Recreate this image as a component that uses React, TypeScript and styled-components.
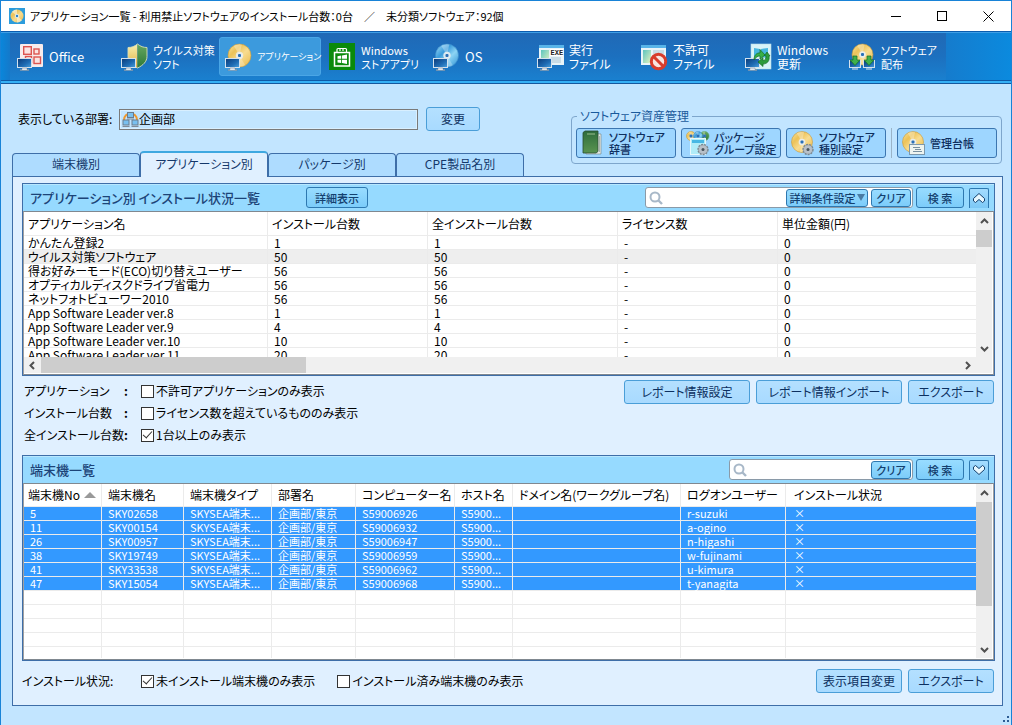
import React from "react";
import styled, { createGlobalStyle, css } from "styled-components";

const GlobalStyle = createGlobalStyle`
  *, *::before, *::after { box-sizing: border-box; }
  body {
    margin: 0;
    background: #c2e5ff;
    color: #000;
    font-family: "Noto Sans CJK JP", sans-serif;
    font-feature-settings: "palt";
    font-size: 12px;
    line-height: 14px;
  }
  button, input { font: inherit; font-feature-settings: inherit; color: inherit; }
  svg { display: block; flex: none; }
`;

/* ---------- window frame ---------- */

const Window = styled.div`
  display: flex;
  flex-direction: column;
  min-width: 1000px;
  min-height: 100vh;
  border: 1px solid #1883d7;
  background: #c2e5ff;
`;

const TitleBar = styled.header`
  display: flex;
  align-items: center;
  height: 30px;
  padding-left: 8px;
  background: #fff;
`;

const TitleText = styled.h1`
  flex: 1;
  margin: 0 0 0 5px;
  font-size: 11px;
  font-weight: 400;
  white-space: pre;
`;

const CaptionButton = styled.button`
  display: flex;
  align-items: center;
  justify-content: center;
  width: 46px;
  height: 30px;
  padding: 0;
  border: 0;
  background: transparent;
`;

/* ---------- toolbar ---------- */

const Toolbar = styled.nav`
  display: flex;
  height: 53px;
  padding: 1px 0 3px 9px;
  border-top: 1px solid #0b5cae;
  border-bottom: 1px solid #14589e;
  box-shadow: inset 0 1px 0 #3f9fe6, inset 0 -2px 0 #35b0f5, inset 0 -3px 0 #0e5aa6;
  background: linear-gradient(90deg, #0a86da, #1c6fbe 16px, #1b74c4 90%, #0b8ade);
`;

const ToolStrip = styled.div`
  display: flex;
  align-items: center;
  gap: 2px;
  width: 936px;
  padding-left: 1px;
  background: linear-gradient(#2069b6, #1c70bf 50%, #1a80cf);
`;

const ToolButton = styled.button<{ $active?: boolean }>`
  display: flex;
  align-items: center;
  gap: 4px;
  width: 102px;
  height: 39px;
  padding: 0 0 0 5px;
  border: 1px solid ${(p) => (p.$active ? "#4aa6e6" : "transparent")};
  border-radius: 3px;
  background: ${(p) => (p.$active ? "#3c9add" : "transparent")};
  color: #fff;
`;

const ToolLabel = styled.span<{ $size: number }>`
  font-size: ${(p) => p.$size}px;
  line-height: 14px;
  text-align: left;
  white-space: pre;
`;

/* ---------- buttons ---------- */

const PushButton = styled.button<{ $width: number }>`
  width: ${(p) => p.$width}px;
  height: 24px;
  padding: 0;
  border: 1px solid #4a9ed8;
  border-radius: 3px;
  background: linear-gradient(#b4e0ff, #a8daff);
  color: #0c3060;
  line-height: 20px;
  white-space: nowrap;
`;

const BarButton = styled.button<{ $width: number; $height: number }>`
  display: flex;
  align-items: center;
  justify-content: center;
  gap: 1px;
  width: ${(p) => p.$width}px;
  height: ${(p) => p.$height}px;
  padding: 0;
  border: 1px solid #2e78b0;
  border-radius: 3px;
  background: linear-gradient(#98dcff, #7cccfa);
  color: #14406e;
  font-size: 11px;
  font-weight: 500;
  white-space: nowrap;
`;

const AssetButton = styled.button`
  display: flex;
  align-items: center;
  gap: 1px;
  width: 100px;
  height: 30px;
  padding: 0 0 0 3px;
  border: 1px solid #3c76b0;
  border-radius: 3px;
  background: #9ed6ff;
  color: #0e2f5e;
  font-size: 11px;
  font-weight: 500;
  line-height: 12px;
  text-align: left;
  white-space: pre;
`;

/* ---------- department row and tabs ---------- */

const TopArea = styled.div`
  display: flex;
  justify-content: space-between;
  height: 92px;
  padding: 0 9px 0 11px;
`;

const LeftColumn = styled.div`
  display: flex;
  flex-direction: column;
  justify-content: space-between;
  padding-top: 23px;
`;

const DepartmentRow = styled.div`
  display: flex;
  align-items: center;
  height: 24px;
  padding-left: 6px;
`;

const DepartmentLabel = styled.label`
  width: 101px;
  white-space: nowrap;
`;

const DepartmentBox = styled.div`
  display: flex;
  align-items: center;
  width: 299px;
  height: 21px;
  margin-right: 8px;
  padding-left: 2px;
  border: 1px solid #7a7a7a;
  box-shadow: inset 0 0 0 1px #d8efff;
  background: #c2e5ff;

  input {
    flex: 1;
    min-width: 0;
    padding: 0;
    border: 0;
    outline: 0;
    background: transparent;
  }
`;

const Tabs = styled.div`
  display: flex;
  align-items: flex-end;
  height: 25px;
`;

const Tab = styled.button<{ $active?: boolean }>`
  width: 128px;
  height: 23px;
  padding: 0 0 2px;
  border: 1px solid #3e6ea8;
  border-bottom: 0;
  border-radius: 4px 4px 0 0;
  background: #aedcff;
  color: #14386a;
  ${(p) =>
    p.$active &&
    css`
      position: relative;
      height: 26px;
      margin-bottom: -1px;
      border-top: 2px solid #3ea8e0;
      background: #e0f0ff;
    `}
`;

const AssetGroup = styled.fieldset`
  display: block;
  align-self: flex-start;
  min-width: 0;
  margin: 25px 0 0;
  padding: 5px 4px;
  border: 1px solid #7ea6cc;
  border-radius: 4px;
  color: #1a5a9c;

  legend {
    margin-left: 1px;
    padding: 0 3px;
  }
`;

const AssetRow = styled.div`
  display: flex;
  gap: 5px;
`;

const AssetDivider = styled.span`
  width: 1px;
  background: #9ab4c8;
`;

/* ---------- panel ---------- */

const Panel = styled.main`
  flex: 1;
  display: flex;
  flex-direction: column;
  margin: 0 8px 19px 11px;
  padding: 6px 7px 12px 9px;
  border: 1px solid #3e6ea8;
  background: #e0f0ff;
`;

const Section = styled.section`
  display: flex;
  flex-direction: column;
  border: 1px solid #3e6ea8;
`;

const SectionBar = styled.div`
  display: flex;
  align-items: center;
  height: 27px;
  padding: 0 5px 0 7px;
  background: #96daff;
  box-shadow: inset 0 1px 0 #b8e8ff;
`;

const SectionTitle = styled.h2`
  margin: 0 46px 0 0;
  color: #1c4478;
  font-size: 13px;
  font-weight: 500;
  line-height: 18px;
`;

const BarTools = styled.div`
  display: flex;
  align-items: center;
  margin-left: auto;
`;

const SearchBox = styled.div<{ $width: number }>`
  display: flex;
  align-items: center;
  gap: 3px;
  width: ${(p) => p.$width}px;
  height: 21px;
  margin-right: 3px;
  padding: 0 1px 0 3px;
  border: 1px solid #8a9aa8;
  border-radius: 3px;
  background: #fff;

  input {
    flex: 1;
    min-width: 0;
    padding: 0;
    border: 0;
    outline: 0;
    background: transparent;
  }
`;

const CollapseButton = styled.button`
  display: flex;
  align-items: center;
  justify-content: center;
  width: 20px;
  height: 20px;
  margin-left: 5px;
  padding: 0;
  border: 1px solid #2e78b0;
  border-bottom: 0;
  border-radius: 2px 2px 0 0;
  background: linear-gradient(#a4dcff, #7cc8f6);
`;

/* ---------- data grids ---------- */

const GridFrame = styled.div`
  display: grid;
  grid-template-columns: 1fr 16px;
  padding: 0 1px 1px 0;
  border: 1px solid #808890;
  border-left-color: #a0a0a0;
  border-right-color: #a0a0a0;
  background: #fff;
`;

const GridView = styled.div<{ $height: number }>`
  height: ${(p) => p.$height}px;
  overflow: hidden;
`;

const Grid = styled.table<{ $kind: "apps" | "clients" }>`
  width: 100%;
  table-layout: fixed;
  border-collapse: separate;
  border-spacing: 0;

  th, td {
    padding: 0 0 0 4px;
    border-right: 1px solid #ebebeb;
    border-bottom: 1px solid #ebebeb;
    font-weight: 400;
    text-align: left;
    white-space: nowrap;
  }
  th:last-child, td:last-child { border-right: 0; }
  th { height: ${(p) => (p.$kind === "apps" ? 24 : 23)}px; line-height: 20px; }
  td { height: 14px; line-height: 13px; }

  ${(p) =>
    p.$kind === "apps"
      ? css`
          td + td { padding-left: 6px; }
        `
      : css`
          td, th + th { padding-left: 6px; }
          th:last-child, td:last-child { padding-left: 8px; }
          td { font-size: 11px; }
        `}
`;

const Row = styled.tr<{ $state?: "hover" | "selected" }>`
  ${(p) =>
    p.$state === "hover" &&
    css`
      td { background: #eee; }
    `}
  ${(p) =>
    p.$state === "selected" &&
    css`
      td { background: #3399ff; color: #fff; }
    `}
`;

const SortHeader = styled.span`
  display: flex;
  align-items: center;
  gap: 4px;
`;

const VerticalTrack = styled.div`
  display: flex;
  flex-direction: column;
  align-items: center;
  background: #f0f0f0;
`;

const HorizontalTrack = styled.div`
  display: flex;
  align-items: center;
  grid-column: 1;
  height: 16px;
  background: #f0f0f0;
`;

const TrackCorner = styled.div`
  background: #f0f0f0;
`;

const ArrowButton = styled.button`
  display: flex;
  align-items: center;
  justify-content: center;
  flex: none;
  width: 17px;
  height: 18px;
  padding: 0;
  border: 0;
  background: transparent;
`;

const Thumb = styled.div<{ $length: number; $horizontal?: boolean }>`
  background: #cdcdcd;
  ${(p) =>
    p.$horizontal
      ? css`width: ${p.$length}px; height: 16px;`
      : css`width: 16px; height: ${p.$length}px;`}
`;

const TrackSpace = styled.div`
  flex: 1;
`;

/* ---------- filters ---------- */

const FilterArea = styled.div`
  display: flex;
  justify-content: space-between;
  align-items: flex-start;
  height: 79px;
  padding: 4px 1px 0 2px;
`;

const FilterList = styled.div`
  display: flex;
  flex-direction: column;
`;

const FilterRow = styled.div`
  display: flex;
  align-items: center;
  height: 22px;
`;

const FilterName = styled.span`
  display: flex;
  justify-content: space-between;
  width: 104px;
  margin-right: 13px;
`;

const Colon = styled.span`
  font-weight: 700;
`;

const BottomName = styled.span`
  width: 119px;
`;

const ButtonRow = styled.div`
  display: flex;
  gap: 6px;
`;

const BottomRow = styled.div`
  display: flex;
  justify-content: space-between;
  align-items: center;
  margin-top: auto;
  padding: 8px 1px 0 0;
`;

const CheckLabel = styled.label`
  display: flex;
  align-items: center;
  gap: 2px;
  margin-right: 22px;
  white-space: nowrap;

  input {
    display: flex;
    align-items: center;
    justify-content: center;
    appearance: none;
    width: 13px;
    height: 13px;
    margin: 0;
    border: 1px solid #333;
    background: #fff;
  }
  input:checked::after {
    content: "";
    width: 5px;
    height: 9px;
    margin-bottom: 3px;
    border: solid #333;
    border-width: 0 1px 1px 0;
    transform: rotate(42deg);
  }
`;

const StatusBar = styled.footer`
  display: flex;
  justify-content: flex-end;
  height: 0;
`;

const SizeGrip = styled.svg`
  align-self: flex-end;
`;

/* ---------- icons ---------- */

const Gradients = () => (
  <svg width="0" height="0" style={{ position: "absolute" }} aria-hidden="true">
    <defs>
      <linearGradient id="screen" x1="0" y1="0" x2="1" y2="1">
        <stop offset="0" stopColor="#0a3a78" />
        <stop offset="0.6" stopColor="#1f6cb4" />
        <stop offset="1" stopColor="#4aa0dc" />
      </linearGradient>
      <linearGradient id="gold" x1="0" y1="0" x2="1" y2="1">
        <stop offset="0" stopColor="#fbe8a8" />
        <stop offset="0.3" stopColor="#ecc258" />
        <stop offset="0.55" stopColor="#f8dc90" />
        <stop offset="1" stopColor="#e8b848" />
      </linearGradient>
      <linearGradient id="blueDisc" x1="0" y1="0" x2="1" y2="1">
        <stop offset="0" stopColor="#a8e0f8" />
        <stop offset="0.35" stopColor="#3a9cdc" />
        <stop offset="0.6" stopColor="#8cd4f4" />
        <stop offset="1" stopColor="#2c90d4" />
      </linearGradient>
      <linearGradient id="page" x1="0" y1="0" x2="1" y2="1">
        <stop offset="0" stopColor="#5cc4c0" />
        <stop offset="1" stopColor="#e4f4c0" />
      </linearGradient>
      <linearGradient id="shieldLeft" x1="0" y1="0" x2="0" y2="1">
        <stop offset="0" stopColor="#f8f0b0" />
        <stop offset="1" stopColor="#e0b040" />
      </linearGradient>
      <linearGradient id="shieldRight" x1="0" y1="0" x2="0" y2="1">
        <stop offset="0" stopColor="#68a860" />
        <stop offset="1" stopColor="#2c7838" />
      </linearGradient>
      <linearGradient id="bookCover" x1="0" y1="0" x2="0" y2="1">
        <stop offset="0" stopColor="#2e6c3c" />
        <stop offset="1" stopColor="#5a9450" />
      </linearGradient>
    </defs>
  </svg>
);

const Monitor = ({ x = 0, y = 15 }: { x?: number; y?: number }) => (
  <g transform={`translate(${x} ${y})`}>
    <rect x="0.5" y="0.5" width="14" height="9" fill="url(#screen)" stroke="#d4e2ee" />
    <path d="M5 10h5v1.500h2v1H3v-1h2z" fill="#dfe7ee" stroke="#5a6c80" strokeWidth="0.4" />
  </g>
);

const Disc = ({ cx, cy, r, fill, rim = "#c89838" }: { cx: number; cy: number; r: number; fill: string; rim?: string }) => (
  <g>
    <circle cx={cx} cy={cy} r={r} fill={fill} stroke={rim} strokeWidth="0.6" />
    <path
      d={`M${cx} ${cy}L${cx - r * 0.5} ${cy - r * 0.84}A${r} ${r} 0 0 1 ${cx + r * 0.2} ${cy - r * 0.96}Z`}
      fill="#fff"
      opacity="0.3"
    />
    <path
      d={`M${cx} ${cy}L${cx + r * 0.5} ${cy + r * 0.84}A${r} ${r} 0 0 1 ${cx - r * 0.2} ${cy + r * 0.96}Z`}
      fill="#fff"
      opacity="0.25"
    />
    <circle cx={cx} cy={cy} r={r * 0.32} fill="#e8eef2" opacity="0.9" />
    <rect x={cx - 1.5} y={cy - 1.5} width="3" height="3" rx="1" fill="#2a70b8" />
  </g>
);

const Icon = ({ children }: { children: React.ReactNode }) => (
  <svg width="28" height="28" viewBox="0 0 28 28" aria-hidden="true">
    {children}
  </svg>
);

const OfficeIcon = () => (
  <Icon>
    <rect x="3" y="1" width="23" height="23" rx="1" fill="#f8ecec" />
    <g fill="#fbe4e2" stroke="#dc5450" strokeWidth="1.4">
      <rect x="6.700" y="3.700" width="7.600" height="7.600" />
      <rect x="17" y="6" width="5" height="5" />
      <rect x="17" y="14" width="6.500" height="6.500" />
      <rect x="8.500" y="13.500" width="6" height="6" />
    </g>
    <Monitor />
  </Icon>
);

const ShieldIcon = () => (
  <Icon>
    <path d="M16.500 1c-3 2.500-6 3.500-9.500 3.500v9c0 5 4 9 9.500 11.500z" fill="url(#shieldLeft)" />
    <path d="M16.500 1c3 2.500 6 3.500 9.500 3.500v9c0 5-4 9-9.500 11.500z" fill="url(#shieldRight)" />
    <path
      d="M16.500 1c3 2.500 6 3.500 9.500 3.500v9c0 5-4 9-9.500 11.500-5.500-2.500-9.500-6.500-9.500-11.500v-9c3.500 0 6.500-1 9.500-3.500z"
      fill="none"
      stroke="#d8e0b8"
      strokeWidth="0.9"
    />
    <Monitor />
  </Icon>
);

const ApplicationIcon = () => (
  <Icon>
    <Disc cx={14.5} cy={12.5} r={11.5} fill="url(#gold)" />
    <Monitor />
  </Icon>
);

const StoreIcon = () => (
  <Icon>
    <rect x="0" y="0" width="26" height="27" fill="#0a8a0a" />
    <path d="M5.500 9.500h15V23h-15z" fill="none" stroke="#fff" strokeWidth="1.500" />
    <path d="M8 9V6.500q0-1 1-1h7.500q1 0 1 1V9M11 5.500V8M14 5.500V8" fill="none" stroke="#fff" strokeWidth="1.200" />
    <path d="M8.500 13.200l3.700-.7v3.300H8.500zM13 12.400l5-.9v4.300h-5zM8.500 16.700h3.700V20l-3.700-.6zM13 16.700h5V21l-5-.9z" fill="#fff" />
  </Icon>
);

const OsIcon = () => (
  <Icon>
    <Disc cx={14} cy={12.5} r={11.5} fill="url(#blueDisc)" rim="#3a8cc8" />
    <Monitor />
  </Icon>
);

const ExeIcon = () => (
  <Icon>
    <rect x="2" y="2" width="25" height="20" fill="#e8f4f8" />
    <rect x="2" y="2" width="25" height="3" fill="#58b4e8" />
    <rect x="4" y="7" width="8" height="13" fill="url(#page)" />
    <rect x="13" y="6" width="13" height="7" fill="#fff" />
    <text x="13.500" y="12" fontFamily="Liberation Mono, monospace" fontSize="7" fontWeight="700" fill="#222">EXE</text>
    <path d="M14 15h10M14 17h10M14 19h10" stroke="#9ab8c8" strokeWidth="0.800" />
    <Monitor />
  </Icon>
);

const BlockedIcon = () => (
  <Icon>
    <rect x="0" y="2" width="25" height="20" fill="#e8f4f8" />
    <rect x="0" y="2" width="25" height="3" fill="#58b4e8" />
    <rect x="2" y="7" width="8" height="13" fill="url(#page)" />
    <path d="M12 8h11M12 10h11" stroke="#9ab8c8" strokeWidth="0.800" />
    <circle cx="17.500" cy="18.500" r="7.200" fill="#f8e4e0" stroke="#d83c2c" strokeWidth="3" />
    <path d="M12.500 13.500l10 10" stroke="#d83c2c" strokeWidth="3" />
  </Icon>
);

const UpdateIcon = () => (
  <Icon>
    <rect x="6" y="1" width="20" height="25" fill="#d8f4f8" stroke="#b8dce8" strokeWidth="0.600" />
    <path d="M9 5l6 1v7l-6 1zM16 6l7-1v10l-7-1z" fill="#48b8e0" />
    <Monitor />
    <path d="M9 17c0-5 3-7.500 6-7V6.500l5 5.500-5 4v-3c-2-.2-4 1-6 4z" fill="#38b048" stroke="#146c24" strokeWidth="0.700" />
    <path d="M24 13c1 5-2 8-6 8v2.500l-5-4.500 5-4.500v3c2 0 3-1.500 3-4.500l-1.500-.5L22 9l3 4z" fill="#2c9c3c" stroke="#146c24" strokeWidth="0.700" />
  </Icon>
);

const DistributeIcon = () => (
  <Icon>
    <Disc cx={13.500} cy={11.500} r={10.500} fill="url(#gold)" />
    {[0, 14].map((x) => (
      <g key={x} transform={`translate(${x} 0)`}>
        <rect x="0.500" y="17.500" width="11" height="7" fill="url(#screen)" stroke="#d4e2ee" />
        <path d="M3 26h6" stroke="#dfe7ee" />
        <path d="M4 13h4v4h3l-5 5.500L1 17h3z" fill="#40b04c" stroke="#146c24" strokeWidth="0.700" />
      </g>
    ))}
  </Icon>
);

const BookIcon = () => (
  <Icon>
    <path d="M5 4l16 1v20H6z" fill="#e8ece8" stroke="#70807c" strokeWidth="0.600" />
    <path d="M3 3.500l2-1.500h13v20.500l-2 1.500H3z" fill="url(#bookCover)" stroke="#284c34" strokeWidth="0.800" />
    <path d="M7 5h8" stroke="#a8c898" strokeWidth="0.900" />
    <path d="M19.500 7v16" stroke="#98a8a0" strokeWidth="0.800" />
  </Icon>
);

const Gear = ({ cx, cy }: { cx: number; cy: number }) => (
  <g>
    <circle cx={cx} cy={cy} r="5" fill="#a4aeb6" stroke="#7c8890" strokeWidth="1.400" strokeDasharray="2 1" />
    <circle cx={cx} cy={cy} r="4" fill="#b8c0c8" />
    <circle cx={cx} cy={cy} r="1.500" fill="#48545c" />
  </g>
);

const PackageIcon = () => (
  <Icon>
    <Disc cx={6} cy={7} r={4.5} fill="url(#gold)" />
    <Disc cx={19.500} cy={7} r={4.500} fill="url(#shieldRight)" rim="#58a060" />
    <Disc cx={13} cy={7} r={4.500} fill="url(#blueDisc)" rim="#3a8cc8" />
    <rect x="5.500" y="9.500" width="15" height="16" fill="#b0ecf8" stroke="#e8f8fc" />
    <rect x="7" y="11" width="12" height="3" fill="#48b8e4" />
    <Gear cx={18} cy={20.500} />
  </Icon>
);

const KindIcon = () => (
  <Icon>
    <Disc cx={12} cy={13} r={10.5} fill="url(#gold)" />
    <Gear cx={18} cy={20.500} />
  </Icon>
);

const LedgerIcon = () => (
  <Icon>
    <Disc cx={12} cy={13} r={10.5} fill="url(#gold)" />
    <rect x="8.500" y="15.500" width="15" height="10" fill="#eef4f0" stroke="#7c98ac" />
    <path d="M12 18.500h7M14 20.500h6M12 22.500h9" stroke="#7890a0" />
  </Icon>
);

const AppLogo = () => (
  <svg width="16" height="16" viewBox="0 0 16 16" aria-hidden="true">
    <rect width="16" height="16" fill="#2c9cdc" />
    <circle cx="8" cy="8" r="6.500" fill="url(#gold)" />
    <path d="M8 8L3 3.800A6.500 6.500 0 0 1 8 1.500zM8 8l5 4.200a6.500 6.500 0 0 1-5 2.300z" fill="#fff" opacity="0.5" />
    <circle cx="8" cy="8" r="2" fill="#e8f2f8" />
    <circle cx="8" cy="8" r="1.200" fill="#2c80c8" />
  </svg>
);

const DepartmentIcon = () => (
  <svg width="17" height="17" viewBox="0 0 17 17" aria-hidden="true">
    <path d="M2 9c0-4 3-6.500 6.500-6.500S15 5 15 9" fill="none" stroke="#f0982c" strokeWidth="2" />
    {[[5, 1], [0.500, 8.500], [9.500, 8.500]].map(([x, y]) => (
      <g key={x}>
        <rect x={x + 0.500} y={y + 0.500} width="6" height="5" fill="#78c0f0" stroke="#6c7c8c" />
        <path d={`M${x} ${y + 7}h7`} stroke="#808c98" />
      </g>
    ))}
  </svg>
);

const SearchIcon = () => (
  <svg width="14" height="14" viewBox="0 0 14 14" aria-hidden="true">
    <circle cx="6" cy="6" r="4.500" fill="none" stroke="#a8b8c8" strokeWidth="2" />
    <path d="M9.500 9.500l3.500 3.500" stroke="#a8b8c8" strokeWidth="2.400" />
  </svg>
);

const arrowPaths = {
  up: "M1 6l3.500-3.500L8 6",
  down: "M1 3l3.500 3.500L8 3",
  left: "M6 1L2.500 4.500 6 8",
  right: "M3 1l3.500 3.500L3 8",
};

const Arrow = ({ to }: { to: keyof typeof arrowPaths }) => (
  <svg width="9" height="9" viewBox="0 0 9 9" aria-hidden="true">
    <path d={arrowPaths[to]} fill="none" stroke="#505050" strokeWidth="2" />
  </svg>
);

const DoubleChevron = ({ down }: { down?: boolean }) => (
  <svg width="14" height="12" viewBox="0 0 14 12" aria-hidden="true">
    <path
      d={
        down
          ? "M1.500 3L3.500 1.500 7 4.500l3.500-3L12.500 3v2.500L7 10.500l-5.500-5z"
          : "M1.500 9L3.500 10.500 7 7.500l3.500 3L12.500 9V6.500L7 1.500l-5.500 5z"
      }
      fill="#e8f8ff"
      stroke="#14406e"
      strokeWidth="1"
    />
  </svg>
);

/* ---------- data ---------- */

const tools = [
  { label: "Office", icon: OfficeIcon, size: 13 },
  { label: "ウイルス対策\nソフト", icon: ShieldIcon, size: 11 },
  { label: "アプリケーション", icon: ApplicationIcon, size: 9, active: true },
  { label: "Windows\nストアアプリ", icon: StoreIcon, size: 11 },
  { label: "OS", icon: OsIcon, size: 13 },
  { label: "実行\nファイル", icon: ExeIcon, size: 12 },
  { label: "不許可\nファイル", icon: BlockedIcon, size: 12 },
  { label: "Windows\n更新", icon: UpdateIcon, size: 12 },
  { label: "ソフトウェア\n配布", icon: DistributeIcon, size: 11 },
];

const assetTools = [
  { label: "ソフトウェア\n辞書", icon: BookIcon },
  { label: "パッケージ\nグループ設定", icon: PackageIcon },
  { label: "ソフトウェア\n種別設定", icon: KindIcon },
  { label: "管理台帳", icon: LedgerIcon },
];

const tabs = ["端末機別", "アプリケーション別", "パッケージ別", "CPE製品名別"];

const appColumns: [string, number?][] = [
  ["アプリケーション名", 244],
  ["インストール台数", 160],
  ["全インストール台数", 190],
  ["ライセンス数", 160],
  ["単位金額(円)"],
];

const apps: [string, number][] = [
  ["かんたん登録2", 1],
  ["ウイルス対策ソフトウェア", 50],
  ["得お好みーモード(ECO)切り替えユーザー", 56],
  ["オプティカルディスクドライブ省電力", 56],
  ["ネットフォトビューワー2010", 56],
  ["App Software Leader ver.8", 1],
  ["App Software Leader ver.9", 4],
  ["App Software Leader ver.10", 10],
  ["App Software Leader ver.11", 20],
];

const clientColumns: [string, number?][] = [
  ["端末機No", 78],
  ["端末機名", 82],
  ["端末機タイプ", 88],
  ["部署名", 84],
  ["コンピューター名", 99],
  ["ホスト名", 58],
  ["ドメイン名(ワークグループ名)", 168],
  ["ログオンユーザー", 105],
  ["インストール状況"],
];

const clients = [
  ["5", "SKY02658", "S59006926", "r-suzuki"],
  ["11", "SKY00154", "S59006932", "a-ogino"],
  ["26", "SKY00957", "S59006947", "n-higashi"],
  ["38", "SKY19749", "S59006959", "w-fujinami"],
  ["41", "SKY33538", "S59006962", "u-kimura"],
  ["47", "SKY15054", "S59006968", "t-yanagita"],
];

const emptyRows = [0, 1, 2, 3, 4];

const filters = [
  { name: "アプリケーション", label: "不許可アプリケーションのみ表示", on: false },
  { name: "インストール台数", label: "ライセンス数を超えているもののみ表示", on: false },
  { name: "全インストール台数", label: "1台以上のみ表示", on: true },
];

/* ---------- parts ---------- */

const Columns = ({ columns }: { columns: [string, number?][] }) => (
  <colgroup>
    {columns.map(([name, width]) => (
      <col key={name} style={width ? { width } : undefined} />
    ))}
  </colgroup>
);

const Check = ({ label, on }: { label: string; on: boolean }) => (
  <CheckLabel>
    <input type="checkbox" defaultChecked={on} />
    {label}
  </CheckLabel>
);

const VerticalScroll = ({ thumb }: { thumb: number }) => (
  <VerticalTrack>
    <ArrowButton aria-label="上へ"><Arrow to="up" /></ArrowButton>
    <Thumb $length={thumb} />
    <TrackSpace />
    <ArrowButton aria-label="下へ"><Arrow to="down" /></ArrowButton>
  </VerticalTrack>
);

export default function App() {
  return (
    <Window>
      <GlobalStyle />
      <Gradients />

      <TitleBar>
        <AppLogo />
        <TitleText>{"アプリケーション一覧 - 利用禁止ソフトウェアのインストール台数：0台　／　未分類ソフトウェア：92個"}</TitleText>
        <CaptionButton aria-label="最小化">
          <svg width="11" height="11"><path d="M0 5.500h10" stroke="#000" /></svg>
        </CaptionButton>
        <CaptionButton aria-label="最大化">
          <svg width="11" height="11"><rect x="0.500" y="0.500" width="9" height="9" fill="none" stroke="#000" /></svg>
        </CaptionButton>
        <CaptionButton aria-label="閉じる">
          <svg width="11" height="11"><path d="M0.500 0.500l10 10M10.500 0.500l-10 10" stroke="#000" /></svg>
        </CaptionButton>
      </TitleBar>

      <Toolbar>
        <ToolStrip>
          {tools.map(({ label, icon: ToolIcon, size, active }) => (
            <ToolButton key={label} $active={active}>
              <ToolIcon />
              <ToolLabel $size={size}>{label}</ToolLabel>
            </ToolButton>
          ))}
        </ToolStrip>
      </Toolbar>

      <TopArea>
        <LeftColumn>
          <DepartmentRow>
            <DepartmentLabel htmlFor="department">表示している部署:</DepartmentLabel>
            <DepartmentBox>
              <DepartmentIcon />
              <input id="department" readOnly value="企画部" />
            </DepartmentBox>
            <PushButton $width={54}>変更</PushButton>
          </DepartmentRow>
          <Tabs>
            {tabs.map((name, i) => (
              <Tab key={name} $active={i === 1}>{name}</Tab>
            ))}
          </Tabs>
        </LeftColumn>
        <AssetGroup>
          <legend>ソフトウェア資産管理</legend>
          <AssetRow>
            {assetTools.map(({ label, icon: AssetIcon }, i) => (
              <React.Fragment key={label}>
                {i === 3 && <AssetDivider />}
                <AssetButton>
                  <AssetIcon />
                  {label}
                </AssetButton>
              </React.Fragment>
            ))}
          </AssetRow>
        </AssetGroup>
      </TopArea>

      <Panel>
        <Section>
          <SectionBar>
            <SectionTitle>アプリケーション別 インストール状況一覧</SectionTitle>
            <BarButton $width={62} $height={21}>詳細表示</BarButton>
            <BarTools>
              <SearchBox $width={268}>
                <SearchIcon />
                <input aria-label="アプリケーションの検索" />
                <BarButton $width={82} $height={18}>
                  詳細条件設定
                  <svg width="8" height="7"><path d="M0 0h8L4 7z" fill="#4a7ca4" /></svg>
                </BarButton>
                <BarButton $width={40} $height={18}>クリア</BarButton>
              </SearchBox>
              <BarButton $width={48} $height={21}>検 索</BarButton>
              <CollapseButton aria-label="折りたたむ"><DoubleChevron /></CollapseButton>
            </BarTools>
          </SectionBar>
          <GridFrame>
            <GridView $height={145}>
              <Grid $kind="apps">
                <Columns columns={appColumns} />
                <thead>
                  <tr>{appColumns.map(([name]) => <th key={name}>{name}</th>)}</tr>
                </thead>
                <tbody>
                  {apps.map(([name, count], i) => (
                    <Row key={name} $state={i === 1 ? "hover" : undefined}>
                      <td>{name}</td>
                      <td>{count}</td>
                      <td>{count}</td>
                      <td>-</td>
                      <td>0</td>
                    </Row>
                  ))}
                </tbody>
              </Grid>
            </GridView>
            <VerticalScroll thumb={17} />
            <HorizontalTrack>
              <ArrowButton aria-label="左へ"><Arrow to="left" /></ArrowButton>
              <Thumb $length={265} $horizontal />
              <TrackSpace />
              <ArrowButton aria-label="右へ"><Arrow to="right" /></ArrowButton>
            </HorizontalTrack>
            <TrackCorner />
          </GridFrame>
        </Section>

        <FilterArea>
          <FilterList>
            {filters.map(({ name, label, on }) => (
              <FilterRow key={name}>
                <FilterName>{name}<Colon>:</Colon></FilterName>
                <Check label={label} on={on} />
              </FilterRow>
            ))}
          </FilterList>
          <ButtonRow>
            <PushButton $width={126}>レポート情報設定</PushButton>
            <PushButton $width={146}>レポート情報インポート</PushButton>
            <PushButton $width={86}>エクスポート</PushButton>
          </ButtonRow>
        </FilterArea>

        <Section>
          <SectionBar>
            <SectionTitle>端末機一覧</SectionTitle>
            <BarTools>
              <SearchBox $width={184}>
                <SearchIcon />
                <input aria-label="端末機の検索" />
                <BarButton $width={40} $height={18}>クリア</BarButton>
              </SearchBox>
              <BarButton $width={48} $height={21}>検 索</BarButton>
              <CollapseButton aria-label="展開する"><DoubleChevron down /></CollapseButton>
            </BarTools>
          </SectionBar>
          <GridFrame>
            <GridView $height={174}>
              <Grid $kind="clients">
                <Columns columns={clientColumns} />
                <thead>
                  <tr>
                    {clientColumns.map(([name], i) => (
                      <th key={name}>
                        {i === 0 ? (
                          <SortHeader>
                            {name}
                            <svg width="12" height="6"><path d="M0 6h12L6 0z" fill="#999" /></svg>
                          </SortHeader>
                        ) : (
                          name
                        )}
                      </th>
                    ))}
                  </tr>
                </thead>
                <tbody>
                  {clients.map(([no, name, computer, user]) => (
                    <Row key={no} $state="selected">
                      <td>{no}</td>
                      <td>{name}</td>
                      <td>SKYSEA端末...</td>
                      <td>企画部/東京</td>
                      <td>{computer}</td>
                      <td>S5900...</td>
                      <td />
                      <td>{user}</td>
                      <td>×</td>
                    </Row>
                  ))}
                  {emptyRows.map((row) => (
                    <Row key={row}>
                      {clientColumns.map(([name]) => <td key={name} />)}
                    </Row>
                  ))}
                </tbody>
              </Grid>
            </GridView>
            <VerticalScroll thumb={104} />
          </GridFrame>
        </Section>

        <BottomRow>
          <FilterRow>
            <BottomName>インストール状況:</BottomName>
            <Check label="未インストール端末機のみ表示" on />
            <Check label="インストール済み端末機のみ表示" on={false} />
          </FilterRow>
          <ButtonRow>
            <PushButton $width={86}>表示項目変更</PushButton>
            <PushButton $width={86}>エクスポート</PushButton>
          </ButtonRow>
        </BottomRow>
      </Panel>

      <StatusBar>
        <SizeGrip width="9" height="9" viewBox="0 0 9 9" aria-hidden="true">
          <path d="M5 0h2v2H5zM5 4h2v2H5zM1 4h2v2H1z" fill="#2c5c94" />
        </SizeGrip>
      </StatusBar>
    </Window>
  );
}
